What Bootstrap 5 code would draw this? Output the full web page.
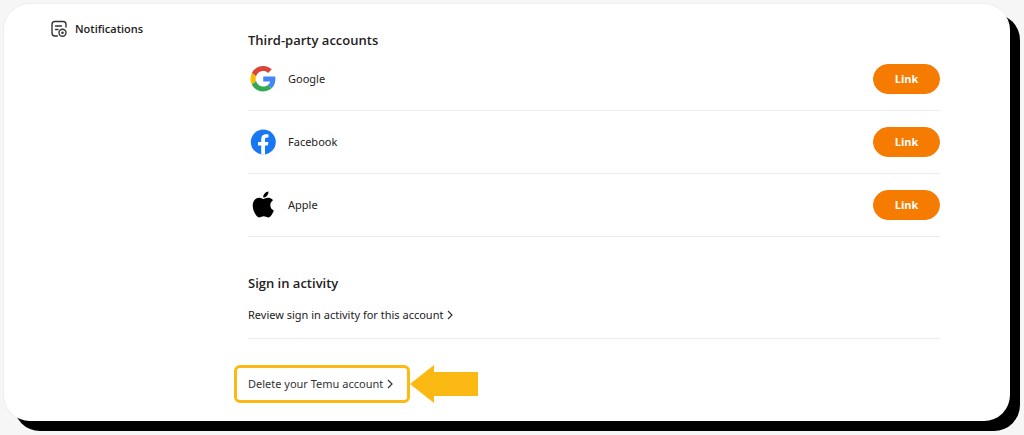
<!DOCTYPE html>
<html lang="en">
<head>
<meta charset="utf-8">
<meta name="viewport" content="width=device-width, initial-scale=1">
<title>Account security</title>
<link href="https://cdn.jsdelivr.net/npm/bootstrap@5.3.0/dist/css/bootstrap.min.css" rel="stylesheet">
<style>
body { background: #f6f6f6; color: #222; font-family: "Noto Sans", "Open Sans", sans-serif; font-size: 11px; line-height: 20px; }
.page { padding: 4px 14px 14px 4px; min-height: 100vh; }
.panel { background: #fff; border-radius: 26px; box-shadow: 10px 10px 0 #000, 0 0 0 1px #eee; }
.side { width: 244px; padding: 15px 0 0 47px; }
.side a { color: #222; font-family: "Open Sans", sans-serif; font-weight: 600; }
.content { padding: 28px 70px 0 0; min-width: 0; }
h2 { font-family: "Open Sans", sans-serif; font-size: 13px; line-height: 16px; font-weight: 600; margin: 0; }
.line { border-bottom: 1px solid #ececec; }
.account { padding: 16px 0; gap: 10px; }
.brand { width: 30px; height: 30px; }
.btn-connect { --bs-btn-color: #fff; --bs-btn-bg: #f67b01; --bs-btn-border-color: #f67b01; --bs-btn-hover-color: #fff; --bs-btn-hover-bg: #dd6d00; width: 67px; height: 30px; padding: 0; font-family: "Open Sans", sans-serif; font-size: 11px; line-height: 20px; font-weight: 700; }
.activity { margin-top: 38px; padding-bottom: 13px; }
.activity a { margin-top: 14px; color: #222; }
.removal { margin: 26px 0 0 -14px; }
.marked { border: 3px solid #fdb913; border-radius: 6px; width: 176px; height: 38px; padding-left: 11px; color: #333; }
</style>
</head>
<body>
<div class="page d-flex">
  <div class="panel d-flex flex-grow-1">
    <nav class="side flex-shrink-0">
      <a href="#" class="d-inline-flex align-items-center gap-2 text-decoration-none">
        <svg width="16" height="18" viewBox="0 0 16 18" fill="none" stroke="#333" stroke-width="1.4" stroke-linecap="round" aria-hidden="true">
          <path d="M15 7V4.500Q15 1.500 12 1.500H4Q1 1.500 1 4.500V13Q1 16 4 16H6.500M4.500 6H10.500M4.500 9.500H7"/>
          <circle cx="11.500" cy="12.700" r="3.500"/><circle cx="11.500" cy="12.700" r=".6"/>
        </svg>
        <span>Notifications</span>
      </a>
    </nav>
    <main class="content flex-grow-1">
      <h2>Third-party accounts</h2>
      <div class="account line d-flex align-items-center">
        <svg class="brand" viewBox="0 0 30 30" aria-hidden="true">
          <g transform="translate(2.500 2) scale(.53)">
            <path fill="#4285f4" d="M46.980 24.550c0-1.570-.15-3.090-.38-4.550H24v9.020h12.940c-.58 2.960-2.260 5.480-4.780 7.180l7.730 6c4.510-4.180 7.090-10.360 7.090-17.650z"/>
            <path fill="#db4437" d="M24 9.500c3.540 0 6.710 1.220 9.210 3.600l6.850-6.850C35.900 2.380 30.470 0 24 0 14.620 0 6.510 5.380 2.560 13.220l7.980 6.190C12.430 13.720 17.740 9.500 24 9.500z"/>
            <path fill="#fbbc05" d="M10.530 28.590c-.48-1.450-.76-2.990-.76-4.590s.27-3.140.76-4.590l-7.980-6.190C.92 16.460 0 20.120 0 24s.92 7.540 2.560 10.780z"/>
            <path fill="#34a853" d="M24 48c6.480 0 11.930-2.130 15.890-5.810l-7.730-6c-2.150 1.450-4.920 2.300-8.160 2.300-6.260 0-11.570-4.220-13.470-9.910l-7.980 6.190C6.510 42.620 14.620 48 24 48z"/>
          </g>
        </svg>
        <span class="flex-grow-1">Google</span>
        <button type="button" class="btn btn-connect rounded-pill">Link</button>
      </div>
      <div class="account line d-flex align-items-center">
        <svg class="brand" viewBox="0 0 30 30" aria-hidden="true">
          <circle cx="15.300" cy="15" r="12.500" fill="#1877f2"/>
          <path fill="#fff" d="M13.200 27.400V18.600H10V15h3.200v-2.800c0-3.200 1.900-4.900 4.700-4.900 1.400 0 2.600.2 2.600.2v3h-1.500c-1.500 0-2 .9-2 1.900V15h3.400l-.6 3.600H17v8.800z"/>
        </svg>
        <span class="flex-grow-1">Facebook</span>
        <button type="button" class="btn btn-connect rounded-pill">Link</button>
      </div>
      <div class="account line d-flex align-items-center">
        <svg class="brand" viewBox="0 0 30 30" aria-hidden="true">
          <path transform="translate(2.300 1.500) scale(1.080)" d="M12.152 6.896c-.948 0-2.415-1.078-3.960-1.040-2.040.027-3.910 1.183-4.961 3.014-2.117 3.675-.546 9.103 1.519 12.090 1.013 1.454 2.208 3.090 3.792 3.039 1.520-.065 2.090-.987 3.935-.987 1.831 0 2.350.987 3.960.948 1.637-.026 2.676-1.480 3.676-2.948 1.156-1.688 1.636-3.325 1.662-3.415-.039-.013-3.182-1.221-3.220-4.857-.026-3.040 2.480-4.494 2.597-4.559-1.429-2.090-3.623-2.324-4.390-2.376-2-.156-3.675 1.090-4.610 1.090zM15.530 3.830c.843-1.012 1.400-2.427 1.245-3.830-1.207.052-2.662.805-3.532 1.818-.78.896-1.454 2.338-1.273 3.714 1.338.104 2.715-.688 3.559-1.701"/>
        </svg>
        <span class="flex-grow-1">Apple</span>
        <button type="button" class="btn btn-connect rounded-pill">Link</button>
      </div>
      <section class="activity line">
        <h2>Sign in activity</h2>
        <a href="#" class="d-flex align-items-center gap-1 text-decoration-none">Review sign in activity for this account
          <svg width="6" height="10" viewBox="0 0 6 10" fill="none" stroke="#333" stroke-width="1.200" aria-hidden="true"><path d="M1 1l4 4-4 4"/></svg>
        </a>
      </section>
      <div class="removal d-flex align-items-center">
        <a href="#" class="marked d-flex align-items-center gap-1 text-decoration-none">Delete your Temu account
          <svg width="6" height="10" viewBox="0 0 6 10" fill="none" stroke="#333" stroke-width="1.200" aria-hidden="true"><path d="M1 1l4 4-4 4"/></svg>
        </a>
        <svg width="68" height="38" viewBox="0 0 68 38" aria-hidden="true"><path fill="#fdb913" d="M0 19L24 0V7H68V31H24V38z"/></svg>
      </div>
    </main>
  </div>
</div>
<script src="https://cdn.jsdelivr.net/npm/bootstrap@5.3.0/dist/js/bootstrap.bundle.min.js"></script>
</body>
</html>
